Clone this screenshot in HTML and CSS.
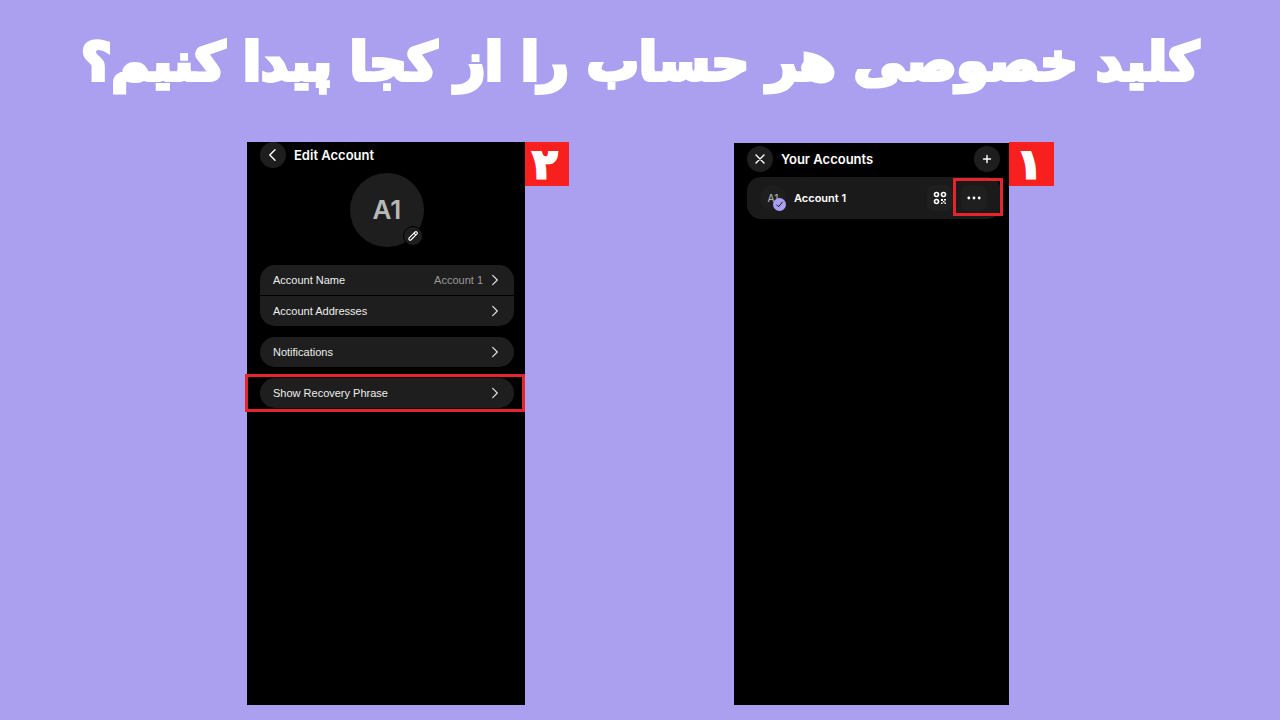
FILE: index.html
```html
<!DOCTYPE html>
<html lang="fa">
<head>
<meta charset="utf-8">
<meta name="viewport" content="width=device-width, initial-scale=1">
<title>کلید خصوصی هر حساب را از کجا پیدا کنیم؟</title>
<link rel="stylesheet" href="styles.css">
</head>
<body>
<header class="headline"><h1 dir="rtl">کلید خصوصی هر حساب را از کجا پیدا کنیم؟</h1></header>
<main class="steps">
  <section class="phone phone-edit" lang="en">
    <span class="step" lang="fa">۲</span>
    <div class="bar">
      <button class="round" aria-label="Back"><svg width="14" height="14" viewBox="0 0 14 14"><path d="M9 1.8 3.8 7 9 12.2"/></svg></button>
      <h2>Edit Account</h2>
    </div>
    <div class="avatar">A1
      <button class="edit" aria-label="Edit avatar"><svg width="12" height="12" viewBox="0 0 12 12"><path d="M2 8.200 8.100 2a1.350 1.350 0 0 1 1.900 1.900L3.900 10a1.350 1.350 0 0 1-1.900-1.800zM7 3.200l1.700 1.700"/></svg></button>
    </div>
    <div class="group">
      <button class="row"><span>Account Name</span><span class="value">Account 1</span><svg width="8" height="12" viewBox="0 0 8 12"><path d="M1.700 1.300 6.300 6l-4.600 4.700"/></svg></button>
      <button class="row"><span>Account Addresses</span><svg width="8" height="12" viewBox="0 0 8 12"><path d="M1.700 1.300 6.300 6l-4.600 4.700"/></svg></button>
    </div>
    <div class="group">
      <button class="row"><span>Notifications</span><svg width="8" height="12" viewBox="0 0 8 12"><path d="M1.700 1.300 6.300 6l-4.600 4.700"/></svg></button>
    </div>
    <div class="group marked">
      <button class="row"><span>Show Recovery Phrase</span><svg width="8" height="12" viewBox="0 0 8 12"><path d="M1.700 1.300 6.300 6l-4.600 4.700"/></svg></button>
    </div>
  </section>
  <section class="phone phone-list" lang="en">
    <span class="step" lang="fa">۱</span>
    <div class="bar">
      <button class="round" aria-label="Close"><svg width="14" height="14" viewBox="0 0 14 14"><path d="m3 3 8 8M11 3l-8 8"/></svg></button>
      <h2>Your Accounts</h2>
      <button class="round add" aria-label="Add account"><svg width="14" height="14" viewBox="0 0 14 14"><path d="M7 3.500v7M3.500 7h7"/></svg></button>
    </div>
    <div class="account">
      <span class="mini">A1<svg class="check" width="13" height="13" viewBox="0 0 13 13"><circle cx="6.500" cy="6.500" r="6.500"/><path d="m3.700 6.900 1.900 1.900 3.700-4.700"/></svg></span>
      <span class="name">Account 1</span>
      <button class="tool" aria-label="QR code"><svg width="14" height="14" viewBox="0 0 14 14"><g class="rings"><circle cx="3.500" cy="3.500" r="2"/><circle cx="10.500" cy="3.500" r="2"/><circle cx="3.500" cy="10.500" r="2"/></g><path class="bits" d="M8 8h2v2H8zM11 8h2v1.500h-2zM10 10h1.500v1.500H10zM8 11.500h1.500V13H8zM11.500 11.500H13V13h-1.500z"/></svg></button>
      <button class="tool more" aria-label="More options"><svg width="14" height="14" viewBox="0 0 14 14"><circle cx="1.800" cy="7" r="1.400"/><circle cx="7" cy="7" r="1.400"/><circle cx="12.200" cy="7" r="1.400"/></svg></button>
    </div>
  </section>
</main>
</body>
</html>
```
FILE: styles.css
```css
* { box-sizing: border-box; }

body {
  margin: 0;
  min-height: 100vh;
  display: flex;
  flex-direction: column;
  background: #ab9ff0;
  color: #fff;
  font-family: Inter, "Liberation Sans", sans-serif;
}

h1, h2 { margin: 0; }

button {
  margin: 0;
  padding: 0;
  border: 0;
  background: none;
  color: inherit;
  font: inherit;
}

svg {
  display: block;
  flex: none;
  fill: none;
  stroke: #fff;
  stroke-width: 1.4;
  stroke-linecap: round;
  stroke-linejoin: round;
}

.headline {
  height: 142px;
  padding-top: 12px;
  text-align: center;
}

.headline h1 {
  font: 700 52px/100px "DejaVu Sans", sans-serif;
  white-space: nowrap;
  -webkit-text-stroke: 4px #fff;
}

.steps {
  flex: 1;
  display: grid;
  grid-template-columns: 247fr 278fr 209fr 275fr 271fr;
  padding-bottom: 15px;
}

.phone {
  position: relative;
  background: #000;
}

.phone-edit { grid-column: 2; padding: 0 11px 0 13px; }
.phone-list { grid-column: 4; margin-top: 1px; padding: 3px 8px 0 13px; }

.step {
  position: absolute;
  top: 0;
  left: 100%;
  width: 44px;
  height: 44px;
  padding-right: 4px;
  background: #f8201f;
  font: 700 40px/44px "DejaVu Sans", sans-serif;
  text-align: center;
  -webkit-text-stroke: 3px #fff;
}

.phone-list .step { top: -1px; width: 45px; }

.bar {
  display: flex;
  align-items: center;
  gap: 8px;
}

.bar h2 { font-size: 13px; line-height: 26px; font-weight: 600; }

.round {
  display: grid;
  place-items: center;
  width: 26px;
  height: 26px;
  border-radius: 50%;
  background: #1e1e1e;
}

.add { margin-left: auto; margin-right: 1px; }

.avatar {
  position: relative;
  width: 74px;
  height: 74px;
  margin: 5px auto 18px;
  border-radius: 50%;
  background: #1e1e1e;
  color: #b8b8b8;
  font-size: 26px;
  line-height: 74px;
  font-weight: 600;
  text-align: center;
}

.edit {
  position: absolute;
  right: 1px;
  bottom: 1px;
  display: grid;
  place-items: center;
  width: 20px;
  height: 20px;
  border: 1px solid #000;
  border-radius: 50%;
  background: #1e1e1e;
}

.edit svg { stroke-width: 1.2; }

.group {
  position: relative;
  margin-bottom: 11px;
}

.row {
  display: flex;
  align-items: center;
  gap: 8px;
  width: 100%;
  height: 30px;
  padding: 0 15px 0 13px;
  background: #1e1e1e;
  color: #eee;
  font-family: "Liberation Sans", Arial, sans-serif;
  font-size: 11px;
}

.row:first-child { border-radius: 15px 15px 0 0; }
.row:last-child { border-radius: 0 0 15px 15px; }
.row:only-child { border-radius: 15px; }
.row + .row { margin-top: 1px; }
.row svg { margin-left: auto; stroke: #ddd; stroke-width: 1.2; }
.row .value { margin-left: auto; color: #999; }
.row .value + svg { margin-left: 0; }

.marked::after {
  content: "";
  position: absolute;
  inset: -4px -11px -4px -15px;
  border: 3px solid #e4252b;
}

.account {
  display: flex;
  align-items: center;
  height: 42px;
  margin-top: 5px;
  padding: 0 14px 0 13px;
  border-radius: 14px;
  background: #1a1a1a;
}

.mini {
  position: relative;
  width: 26px;
  height: 26px;
  margin-right: 8px;
  border-radius: 50%;
  background: #1e1e1e;
  color: #aaa;
  font-size: 10px;
  line-height: 26px;
  font-weight: 500;
  text-align: center;
}

.check {
  position: absolute;
  right: 0;
  bottom: 0;
  fill: #ab9ff2;
  stroke: none;
}

.check path { fill: none; stroke: #1a1a1a; stroke-width: 1; }

.name { font-size: 11px; font-weight: 600; }

.tool {
  position: relative;
  display: grid;
  place-items: center;
  width: 26px;
  height: 26px;
  margin-left: auto;
  border-radius: 8px;
  background: #1f1f1f;
}

.rings { stroke-width: 1.6; }
.bits { fill: #fff; stroke: none; }

.more { margin-left: 8px; }
.more svg { fill: #fff; stroke: none; }

.more::after {
  content: "";
  position: absolute;
  inset: -7px -16px -5px -8px;
  border: 3px solid #e4252b;
}
```
